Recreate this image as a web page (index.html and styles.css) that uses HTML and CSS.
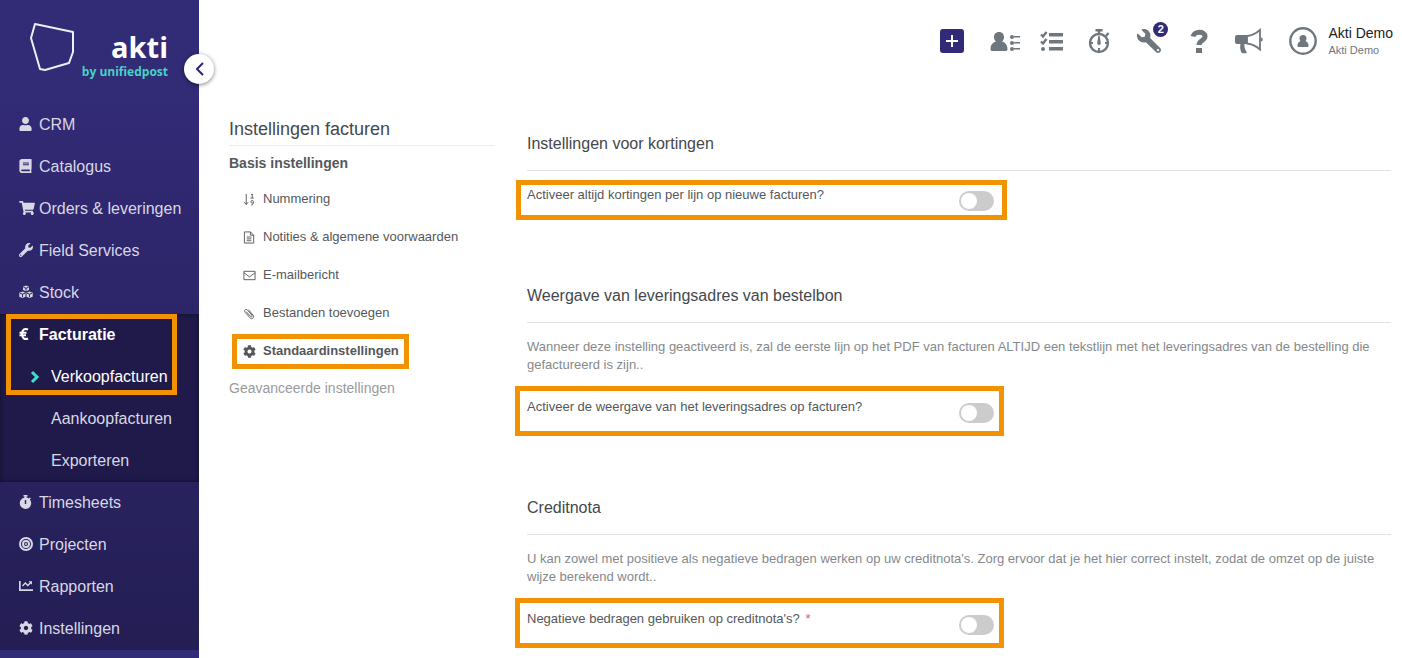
FILE: index.html
```html
<!DOCTYPE html>
<html lang="nl">
<head>
    <meta charset="utf-8">
    <title>Instellingen facturen</title>
    <link rel="stylesheet" href="styles.css">
</head>
<body>

    <aside class="sidebar">
        <div class="logo">
            <svg class="logo-shape" width="44" height="48" viewBox="0 0 44 48"><path d="M5 1 L43 9 V29 L39 40 L15 47 L10 46 L1 15 Z"/></svg>
            <div class="logo-text">
                <span class="logo-name">akti</span>
                <span class="logo-by">by unifiedpost</span>
            </div>
        </div>
        <button class="collapse" aria-label="Menu inklappen">
            <svg width="9" height="14" viewBox="0 0 9 14"><path d="M8 1 L2 7 L8 13"/></svg>
        </button>

        <nav class="menu">
            <a href="#"><svg class="w13" viewBox="0 0 448 512"><path d="M224 256c70.700 0 128-57.300 128-128S294.700 0 224 0 96 57.300 96 128s57.300 128 128 128zm89.600 32h-16.700c-22.200 10.200-46.900 16-72.900 16s-50.600-5.800-72.900-16h-16.700C60.200 288 0 348.200 0 422.400V464c0 26.500 21.500 48 48 48h352c26.500 0 48-21.500 48-48v-41.600c0-74.200-60.200-134.400-134.400-134.400z"/></svg>CRM</a>
            <a href="#"><svg class="w13" viewBox="0 0 448 512"><path d="M448 360V24c0-13.300-10.700-24-24-24H96C43 0 0 43 0 96v320c0 53 43 96 96 96h328c13.300 0 24-10.700 24-24v-16c0-7.500-3.500-14.300-8.900-18.700-4.200-15.400-4.200-59.300 0-74.700 5.400-4.300 8.900-11.100 8.900-18.600zM128 134c0-3.300 2.700-6 6-6h212c3.300 0 6 2.700 6 6v20c0 3.300-2.700 6-6 6H134c-3.300 0-6-2.700-6-6v-20zm0 64c0-3.300 2.700-6 6-6h212c3.300 0 6 2.700 6 6v20c0 3.300-2.700 6-6 6H134c-3.300 0-6-2.700-6-6v-20zm253.400 250H96c-17.700 0-32-14.300-32-32 0-17.600 14.400-32 32-32h285.400c-1.900 17.100-1.900 46.900 0 64z"/></svg>Catalogus</a>
            <a href="#"><svg class="w16" viewBox="0 0 576 512"><path d="M528.120 301.319l47.273-208C578.806 78.301 567.391 64 551.990 64H159.208l-9.166-44.810C147.758 8.021 137.930 0 126.529 0H24C10.745 0 0 10.745 0 24v16c0 13.255 10.745 24 24 24h69.883l70.248 343.435C147.325 417.100 136 435.222 136 456c0 30.928 25.072 56 56 56s56-25.072 56-56c0-15.674-6.447-29.835-16.824-40h209.647C430.447 426.165 424 440.326 424 456c0 30.928 25.072 56 56 56s56-25.072 56-56c0-22.172-12.888-41.332-31.579-50.405l5.517-24.276c3.413-15.018-8.002-29.319-23.403-29.319H218.117l-6.545-32h293.145c11.206 0 20.920-7.754 23.403-18.681z"/></svg>Orders &amp; leveringen</a>
            <a href="#"><svg viewBox="0 0 512 512"><path d="M507.730 109.100c-2.240-9.030-13.540-12.090-20.120-5.510l-74.360 74.360-67.880-11.310-11.310-67.880 74.360-74.360c6.620-6.620 3.430-17.900-5.660-20.160-47.380-11.740-99.550.91-136.580 37.930-39.640 39.640-50.550 97.100-34.050 147.200L18.740 402.760c-24.990 24.990-24.990 65.510 0 90.500 24.990 24.990 65.510 24.990 90.500 0l213.210-213.210c50.120 16.710 107.470 5.680 147.370-34.220 37.070-37.070 49.700-89.320 37.910-136.730zM64 472c-13.250 0-24-10.750-24-24 0-13.260 10.750-24 24-24s24 10.740 24 24c0 13.250-10.750 24-24 24z"/></svg>Field Services</a>
            <a href="#"><svg viewBox="0 0 14 14"><path d="M7 .5l3 1.200v3.300L7 6.200 4 5V1.700zM3.500 6.500l3 1.200v4L3.500 13 .3 11.700v-4zM10.500 6.500l3.200 1.200v4L10.500 13l-3-1.300v-4z"/><path class="cut" d="M4.500 2.300L7 3.300l2.500-1M7 3.300v2.400M1 8.200l2.500 1 2.500-1M3.500 9.200v3M8 8.200l2.500 1 2.500-1M10.500 9.200v3"/></svg>Stock</a>

            <div class="group">
                <a href="#" class="current"><svg viewBox="0 0 14 14"><path class="euro" d="M9 2.500C5.500.8 3 3 3 7s2.500 6.200 6 4.500M.5 5.700h7M.5 8.300h6.500"/></svg>Facturatie</a>
                <a href="#" class="sub active"><svg width="10" height="14" viewBox="0 0 10 14"><path d="M2 2 L7 7 L2 12"/></svg>Verkoopfacturen</a>
                <a href="#" class="sub">Aankoopfacturen</a>
                <a href="#" class="sub">Exporteren</a>
                <span class="mark mark-menu"></span>
            </div>

            <a href="#"><svg class="w13" viewBox="0 0 12 14"><path fill-rule="evenodd" d="M4 0h4v1.600H7v1a5.600 5.600 0 0 1 2.400 1l1-1 1 1-1 1A5.700 5.700 0 1 1 5 2.600v-1H4zM5.300 5v4h1.400V5z"/></svg>Timesheets</a>
            <a href="#"><svg viewBox="0 0 14 14"><circle class="ring" cx="7" cy="7" r="6"/><circle class="ring" cx="7" cy="7" r="3"/><circle cx="7" cy="7" r="1"/></svg>Projecten</a>
            <a href="#"><svg viewBox="0 0 14 14"><path d="M0 2h1.700v8.300H14V12H0zM9.500 2.200H13v3.500l-1.200-1.200-3 3-2.500-2.400L4 7.500 3 6.400l3.300-3.300 2.500 2.400 1.900-2z"/></svg>Rapporten</a>
            <a href="#"><svg viewBox="0 0 512 512"><path d="M487.400 315.700l-42.600-24.600c4.300-23.200 4.300-47 0-70.200l42.600-24.600c4.900-2.800 7.100-8.600 5.500-14-11.100-35.600-30-67.800-54.700-94.600-3.800-4.100-10-5.100-14.800-2.300L380.800 110c-17.900-15.400-38.500-27.300-60.800-35.100V25.800c0-5.600-3.900-10.500-9.400-11.700-36.700-8.200-74.300-7.800-109.200 0-5.500 1.200-9.400 6.100-9.400 11.700V75c-22.200 7.900-42.800 19.800-60.800 35.100L88.700 85.500c-4.900-2.800-11-1.900-14.800 2.300-24.700 26.700-43.600 58.900-54.700 94.600-1.700 5.400.6 11.200 5.500 14L67.300 221c-4.300 23.200-4.300 47 0 70.200l-42.600 24.600c-4.900 2.800-7.100 8.600-5.500 14 11.100 35.600 30 67.800 54.700 94.600 3.800 4.100 10 5.100 14.800 2.300l42.600-24.600c17.900 15.400 38.500 27.300 60.800 35.100v49.200c0 5.600 3.900 10.500 9.400 11.700 36.700 8.200 74.300 7.800 109.200 0 5.500-1.200 9.400-6.100 9.400-11.700v-49.200c22.200-7.900 42.800-19.800 60.800-35.100l42.600 24.600c4.900 2.800 11 1.900 14.800-2.300 24.700-26.700 43.600-58.900 54.700-94.600 1.500-5.500-.7-11.300-5.600-14.100zM256 336c-44.100 0-80-35.900-80-80s35.900-80 80-80 80 35.900 80 80-35.900 80-80 80z"/></svg>Instellingen</a>
        </nav>
    </aside>

    <div class="page">
        <header class="topbar">
            <button class="tool add" aria-label="Toevoegen">
                <svg width="12" height="12" viewBox="0 0 12 12"><path d="M5 0h2v5h5v2H7v5H5V7H0V5h5z"/></svg>
            </button>
            <button class="tool" aria-label="Contacten">
                <svg width="30" height="24" viewBox="0 0 30 24"><path d="M9 3c3.500 0 5 2.500 5 5 0 2-.8 3.500-2 4.500 3.500 1 5.500 4 5.500 7.500 0 1.600-.8 2-2 2h-13C1 22 .5 21.400.5 20c0-3.500 2-6.500 5.500-7.500C4.800 11.500 4 10 4 8c0-2.500 1.500-5 5-5zM24 7h6v1.500h-6zM24 13h6v1.500h-6zM24 19h6v1.500h-6z"/><circle cx="22" cy="8" r="2"/><circle cx="22" cy="14" r="2"/><circle cx="22" cy="20" r="2"/></svg>
            </button>
            <button class="tool small" aria-label="Taken">
                <svg width="24" height="24" viewBox="0 0 24 24"><path d="M9 4h14v3.500H9zM9 11h14v3.500H9zM9 18h14v3.500H9z"/><circle cx="3" cy="20" r="2"/><path class="line" d="M1 5.500l2 2L6.500 3M1 12.500l2 2L6.500 10"/></svg>
            </button>
            <button class="tool" aria-label="Tijd">
                <svg width="24" height="26" viewBox="0 0 24 26"><circle class="line" cx="12" cy="15" r="9"/><path class="line" d="M12 2v4M8.500 2.200h7M19 8l2.500-3"/><path d="M11.300 8h1.400l1 6.500a1.800 1.800 0 1 1-3.400 0zM11 20h2v3h-2zM4 14h2v2H4zM18 14h2v2h-2z"/></svg>
            </button>
            <button class="tool" aria-label="Onderhoud">
                <svg class="flip" width="24" height="24" viewBox="0 0 512 512"><path d="M507.730 109.100c-2.240-9.030-13.540-12.090-20.120-5.510l-74.360 74.360-67.880-11.310-11.310-67.880 74.360-74.360c6.620-6.620 3.430-17.900-5.660-20.160-47.380-11.740-99.550.91-136.580 37.930-39.640 39.640-50.550 97.100-34.050 147.200L18.740 402.760c-24.990 24.990-24.990 65.510 0 90.500 24.990 24.990 65.510 24.990 90.500 0l213.210-213.210c50.120 16.710 107.470 5.680 147.370-34.220 37.070-37.070 49.700-89.320 37.910-136.730zM64 472c-13.250 0-24-10.750-24-24 0-13.260 10.750-24 24-24s24 10.740 24 24c0 13.250-10.750 24-24 24z"/></svg>
                <span class="badge">2</span>
            </button>
            <button class="tool" aria-label="Help">
                <svg width="18" height="24" viewBox="0 0 18 24"><path class="question" d="M3 7.500C4 2 15 1.500 15 7.500c0 4-6 4-6 8.500"/><path d="M6 19h6v5H6z"/></svg>
            </button>
            <button class="tool" aria-label="Nieuws">
                <svg width="28" height="26" viewBox="0 0 28 26"><path d="M2 7h10v9H9.500c-.5 3 .5 5.500 2.500 8.500-1 1-4.500 1.300-5.500 0-1.500-3-1.500-5.500-1-8.500H2c-1.200 0-2-.8-2-2V9c0-1.200.8-2 2-2zM26 9.500c2.300 0 2.300 4 0 4z"/><path class="line thin" d="M12 8c5-.5 9-2.500 13-6v19.500c-4-3.500-8-5.500-13-6z"/></svg>
            </button>
            <a href="#" class="account">
                <svg width="28" height="28" viewBox="0 0 28 28"><circle class="line" cx="14" cy="14" r="12.700"/><path d="M14 8c2.300 0 3.500 1.600 3.500 3.400 0 1.200-.5 2-1.200 2.700 2.200.6 3.200 2.400 3.200 4.400 0 1-.5 1.500-1.500 1.500h-8c-1 0-1.500-.5-1.500-1.500 0-2 1-3.800 3.200-4.400-.7-.7-1.200-1.500-1.200-2.700C10.500 9.600 11.700 8 14 8z"/></svg>
                <span class="account-name">Akti Demo<small>Akti Demo</small></span>
            </a>
        </header>

        <div class="content">
            <nav class="settings-nav">
                <h1>Instellingen facturen</h1>
                <h2>Basis instellingen</h2>
                <ul>
                    <li><a href="#"><svg viewBox="0 0 14 14"><path class="stroke" d="M3.500 1v11M1.500 10l2 2.500 2-2.500M8.500 2l1.500-.8V5.500M8 5.500h3.500M11 10.200c-.8 1.200-2.500.6-2.500-.7 0-2 2.800-2 2.800 0 0 2-.8 3.500-2.500 3.500"/></svg>Nummering</a></li>
                    <li><a href="#"><svg viewBox="0 0 14 14"><path class="stroke" d="M1.500 1h6.500l3.500 3.500v8.500h-10zM8 1v3.500h3.500M4 6.500h5M4 8.500h5M4 10.500h5"/></svg>Notities &amp; algemene voorwaarden</a></li>
                    <li><a href="#"><svg viewBox="0 0 14 14"><path class="stroke" d="M1 2.500h12v9H1zM1 4l6 4.500L13 4"/></svg>E-mailbericht</a></li>
                    <li><a href="#"><svg viewBox="0 0 14 14"><path class="stroke" d="M3.500 5L8 10c1.200 1.200 2.500 0 1.500-1.300L5 3.500C3 1.500.5 3.500 2.300 5.700l5 5.800c2.300 2.500 5.500-.3 3.500-2.800L6 3"/></svg>Bestanden toevoegen</a></li>
                    <li><a href="#" class="selected"><svg viewBox="0 0 512 512"><path d="M487.400 315.700l-42.600-24.600c4.300-23.200 4.300-47 0-70.200l42.600-24.600c4.900-2.800 7.100-8.600 5.500-14-11.100-35.600-30-67.800-54.700-94.600-3.800-4.100-10-5.100-14.800-2.300L380.800 110c-17.900-15.400-38.500-27.300-60.800-35.100V25.800c0-5.600-3.900-10.500-9.400-11.700-36.700-8.200-74.300-7.800-109.200 0-5.500 1.200-9.400 6.100-9.400 11.700V75c-22.200 7.900-42.800 19.800-60.800 35.100L88.700 85.500c-4.900-2.800-11-1.900-14.800 2.300-24.700 26.700-43.600 58.900-54.700 94.600-1.700 5.400.6 11.200 5.500 14L67.300 221c-4.300 23.200-4.300 47 0 70.200l-42.600 24.600c-4.900 2.800-7.100 8.600-5.500 14 11.100 35.600 30 67.800 54.700 94.600 3.800 4.100 10 5.100 14.800 2.300l42.600-24.600c17.900 15.400 38.500 27.300 60.800 35.100v49.200c0 5.600 3.900 10.500 9.400 11.700 36.700 8.200 74.300 7.800 109.200 0 5.500-1.200 9.400-6.100 9.400-11.700v-49.200c22.200-7.900 42.800-19.800 60.800-35.100l42.600 24.600c4.900 2.800 11 1.900 14.800-2.300 24.700-26.700 43.600-58.900 54.700-94.600 1.500-5.500-.7-11.300-5.600-14.100zM256 336c-44.100 0-80-35.900-80-80s35.900-80 80-80 80 35.900 80 80-35.900 80-80 80z"/></svg>Standaardinstellingen<span class="mark mark-nav"></span></a></li>
                </ul>
                <a href="#" class="advanced">Geavanceerde instellingen</a>
            </nav>

            <main class="settings">
                <section>
                    <h3>Instellingen voor kortingen</h3>
                    <div class="option">
                        <label for="discount">Activeer altijd kortingen per lijn op nieuwe facturen?</label>
                        <input type="checkbox" id="discount" class="toggle">
                        <span class="mark mark-short"></span>
                    </div>
                </section>

                <section>
                    <h3>Weergave van leveringsadres van bestelbon</h3>
                    <p>Wanneer deze instelling geactiveerd is, zal de eerste lijn op het PDF van facturen ALTIJD een tekstlijn met het leveringsadres van de bestelling die gefactureerd is zijn..</p>
                    <div class="option">
                        <label for="address">Activeer de weergave van het leveringsadres op facturen?</label>
                        <input type="checkbox" id="address" class="toggle">
                        <span class="mark mark-tall"></span>
                    </div>
                </section>

                <section>
                    <h3>Creditnota</h3>
                    <p>U kan zowel met positieve als negatieve bedragen werken op uw creditnota's. Zorg ervoor dat je het hier correct instelt, zodat de omzet op de juiste wijze berekend wordt..</p>
                    <div class="option">
                        <label for="negative">Negatieve bedragen gebruiken op creditnota's? <span class="required">*</span></label>
                        <input type="checkbox" id="negative" class="toggle">
                        <span class="mark mark-tall"></span>
                    </div>
                </section>
            </main>
        </div>
    </div>

</body>
</html>
```

FILE: styles.css
```css
* {
    box-sizing: border-box;
}
body {
    margin: 0;
    display: flex;
    min-height: 100vh;
    font-family: "Liberation Sans", Arial, sans-serif;
    font-size: 13px;
    line-height: 18px;
    color: #55585b;
    background: #fff;
}
a {
    color: inherit;
    text-decoration: none;
}
button {
    padding: 0;
    border: none;
    background: none;
    cursor: pointer;
}
h1, h2, h3, p, ul {
    margin: 0;
    padding: 0;
    font-weight: normal;
}
ul {
    list-style: none;
}

/* sidebar */
.sidebar {
    position: relative;
    flex: none;
    width: 199px;
    background: #322b76;
}
.logo {
    display: flex;
    height: 104px;
    padding: 23px 31px 0 30px;
    justify-content: space-between;
}
.logo-shape {
    flex: none;
    fill: none;
    stroke: #efeef5;
    stroke-width: 2;
    stroke-linejoin: round;
}
.logo-text {
    display: flex;
    flex-direction: column;
    align-items: flex-end;
    width: 0;
    padding-top: 8px;
    font-family: "Open Sans", sans-serif;
    font-weight: bold;
    white-space: nowrap;
}
.logo-name {
    font-size: 29px;
    line-height: 32px;
    color: #fff;
}
.logo-by {
    font-size: 12px;
    line-height: 18px;
    color: #48d1c5;
}
.collapse {
    position: absolute;
    top: 54px;
    right: -15px;
    display: flex;
    align-items: center;
    justify-content: center;
    width: 30px;
    height: 30px;
    border-radius: 50%;
    background: #fff;
    box-shadow: 0 1px 4px rgba(0,0,0,0.5);
}
.collapse path {
    fill: none;
    stroke: #2c2570;
    stroke-width: 2;
}
.menu {
    background: linear-gradient(#322a75, #241e54);
    font-size: 16px;
    color: #d8d7e4;
}
.menu a {
    display: flex;
    align-items: center;
    height: 42px;
    padding-left: 19px;
    white-space: nowrap;
}
.menu svg {
    flex: none;
    width: 14px;
    height: 14px;
    margin: 0 6px 2px 0;
    fill: currentColor;
}
.menu .w13 {
    width: 13px;
    margin-right: 7px;
}
.menu .w16 {
    width: 16px;
    margin-right: 4px;
}
.menu .cut {
    fill: none;
    stroke: #2b2466;
}
.menu .ring {
    fill: none;
    stroke: currentColor;
    stroke-width: 2;
}
.menu .euro {
    fill: none;
    stroke: #fff;
    stroke-width: 2;
}
.group {
    position: relative;
    background: #201a4b;
    box-shadow: inset 0 0 5px rgba(0,0,0,0.5);
}
.menu .current {
    font-weight: bold;
    color: #fff;
}
.menu .sub {
    padding-left: 51px;
}
.menu .active {
    padding-left: 30px;
    color: #fff;
}
.active svg {
    width: 10px;
    margin: 0 11px 0 0;
}
.active path {
    fill: none;
    stroke: #3fe0cb;
    stroke-width: 3;
}

/* orange frames */
.mark {
    position: absolute;
    border: 5px solid #f39200;
    pointer-events: none;
}
.mark-menu {
    top: 0;
    left: 6px;
    width: 171px;
    height: 81px;
}
.mark-nav {
    inset: 2px -10px 1px -11px;
}
.mark-short {
    inset: -6px -13px -9px -11px;
}
.mark-tall {
    inset: -12px -10px -13px -12px;
}

/* top bar */
.page {
    flex: 1;
    min-width: 0;
}
.topbar {
    display: flex;
    align-items: center;
    justify-content: flex-end;
    gap: 20px;
    height: 82px;
    padding-right: 9px;
    color: #6f777d;
}
.tool {
    position: relative;
    display: flex;
    align-items: center;
    justify-content: center;
    width: 30px;
    height: 30px;
    color: inherit;
}
.tool.small {
    width: 24px;
}
.tool.add {
    width: 24px;
    height: 24px;
    margin-right: 6px;
    border-radius: 3px;
    background: #322a76;
    color: #fff;
}
.topbar svg {
    flex: none;
    fill: currentColor;
}
.topbar .line {
    fill: none;
    stroke: currentColor;
    stroke-width: 2.400;
}
.topbar .thin {
    stroke-width: 1.800;
}
.topbar .question {
    fill: none;
    stroke: currentColor;
    stroke-width: 5;
}
.flip {
    transform: scaleX(-1);
}
.badge {
    position: absolute;
    top: -4px;
    right: -4px;
    width: 15px;
    height: 15px;
    border-radius: 50%;
    background: #322a76;
    color: #fff;
    font-size: 11px;
    font-weight: bold;
    line-height: 15px;
    text-align: center;
}
.account {
    display: flex;
    align-items: center;
    gap: 11px;
    margin-left: 5px;
}
.account-name {
    font-size: 14px;
    line-height: 17px;
    color: #222;
}
.account-name small {
    display: block;
    font-size: 11px;
    line-height: 16px;
    color: #6f777d;
}

/* content */
.content {
    display: flex;
    gap: 32px;
    padding: 36px 11px 12px 30px;
}
.settings-nav {
    flex: none;
    width: 266px;
}
.settings-nav h1 {
    padding-bottom: 5px;
    border-bottom: 1px solid #ececec;
    font-size: 18px;
    line-height: 22px;
    color: #44484c;
}
.settings-nav h2 {
    padding: 8px 0;
    font-size: 14px;
    font-weight: bold;
}
.settings-nav li {
    display: flex;
    padding-left: 14px;
}
.settings-nav li a {
    position: relative;
    display: flex;
    align-items: center;
    gap: 7px;
    height: 38px;
}
.settings-nav svg {
    width: 13px;
    height: 13px;
    fill: currentColor;
}
.settings-nav .stroke {
    fill: none;
    stroke: currentColor;
}
.settings-nav .selected {
    font-weight: bold;
}
.advanced {
    display: block;
    padding-top: 9px;
    font-size: 14px;
    color: #999b9d;
}
.settings {
    flex: 1;
    padding-top: 14px;
}
section {
    margin-bottom: 73px;
}
section:last-child {
    margin-bottom: 0;
}
h3 {
    margin-bottom: 15px;
    padding-bottom: 14px;
    border-bottom: 1px solid #e2e2e2;
    font-size: 16px;
    line-height: 24px;
    color: #44484c;
}
p {
    margin-bottom: 24px;
    color: #85898c;
}
.option {
    position: relative;
    display: flex;
    align-items: flex-start;
    justify-content: space-between;
    max-width: 467px;
}
.required {
    margin-left: 2px;
    color: #e0566a;
}
.toggle {
    appearance: none;
    flex: none;
    width: 35px;
    height: 20px;
    margin: 5px 0 0;
    padding: 2px;
    border-radius: 10px;
    background: #ccc;
    cursor: pointer;
}
.toggle::before {
    content: "";
    display: block;
    width: 16px;
    height: 16px;
    border-radius: 50%;
    background: #fff;
}
.toggle:checked {
    background: #322a76;
}
.toggle:checked::before {
    margin-left: 15px;
}
```
